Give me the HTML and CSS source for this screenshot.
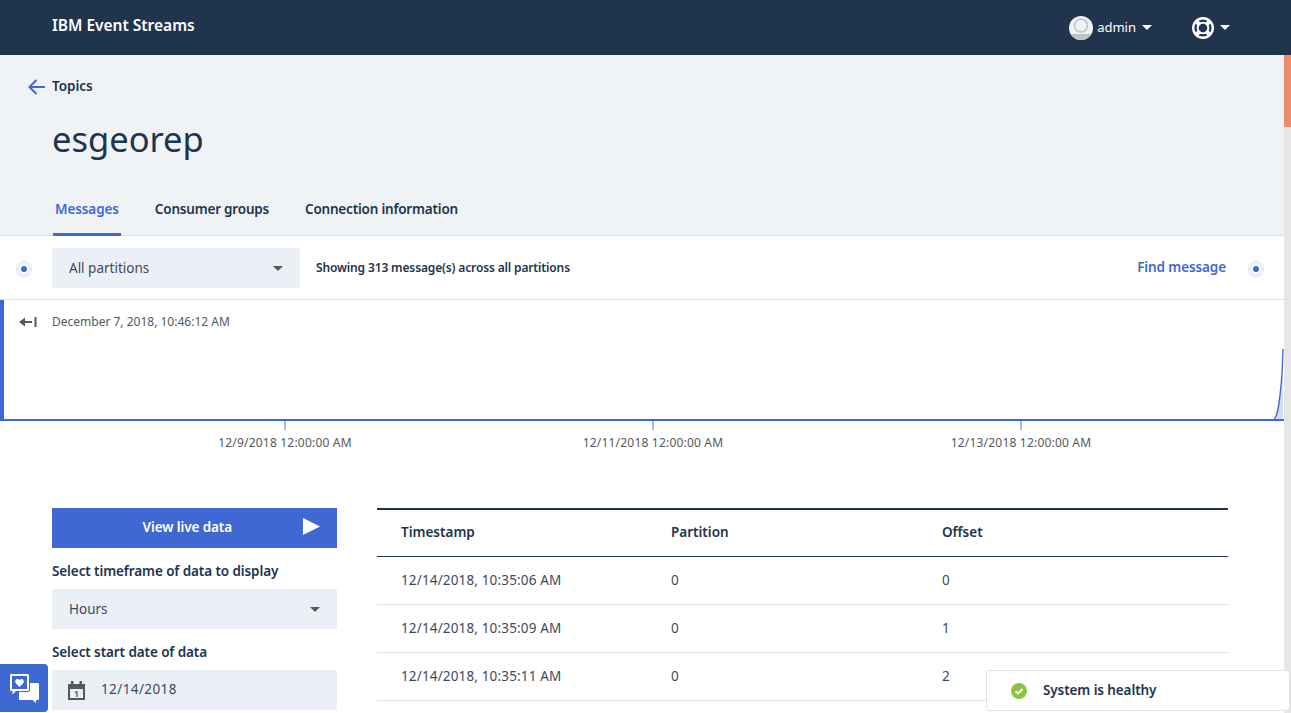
FILE: index.html
```html
<!DOCTYPE html>
<html>
<head>
  <meta charset="utf-8">
  <title>IBM Event Streams</title>
  <link rel="stylesheet" href="styles.css">
</head>
<body>

  <header class="masthead">
    <span class="brand">IBM Event Streams</span>
    <div class="user-menu">
      <svg class="avatar" width="24" height="24" viewBox="0 0 24 24">
        <defs><clipPath id="avatar-clip"><circle cx="12" cy="12" r="12"/></clipPath></defs>
        <circle cx="12" cy="12" r="12" fill="#f0f2f1"/>
        <rect x="0" y="18" width="24" height="6" fill="#bcc6c4" clip-path="url(#avatar-clip)"/>
        <circle cx="12" cy="9.500" r="6.500" fill="none" stroke="#bcc6c4" stroke-width="1.600"/>
      </svg>
      <span class="user-name">admin</span>
      <span class="caret caret-white"></span>
    </div>
    <div class="help-menu">
      <svg width="22" height="22" viewBox="0 0 22 22">
        <circle cx="11" cy="11" r="11" fill="#fff"/>
        <circle cx="11" cy="11" r="8.600" fill="#21344e"/>
        <path d="M4 4L8 8M18 4L14 8M4 18L8 14M18 18L14 14" stroke="#fff" stroke-width="4"/>
        <circle cx="11" cy="11" r="6.300" fill="#fff"/>
        <circle cx="11" cy="11" r="4.300" fill="#21344e"/>
      </svg>
      <span class="caret caret-white"></span>
    </div>
  </header>

  <div class="page">
    <main class="content">

      <section class="topic-head">
        <a class="back-link" href="#">
          <svg width="18" height="16" viewBox="0 0 18 16">
            <path d="M8.500 1L1.500 8l7 7M1.500 8H17" fill="none" stroke="#3f68d2" stroke-width="2"/>
          </svg>
          <span>Topics</span>
        </a>
        <h1 class="topic-name">esgeorep</h1>
        <nav class="tabs">
          <a class="tab tab-active" href="#">Messages</a>
          <a class="tab" href="#">Consumer groups</a>
          <a class="tab" href="#">Connection information</a>
        </nav>
      </section>

      <section class="toolbar">
        <span class="pulse pulse-left"><i></i></span>
        <div class="select select-partitions">
          <span>All partitions</span>
          <span class="caret caret-grey"></span>
        </div>
        <span class="message-count">Showing 313 message(s) across all partitions</span>
        <a class="find-link" href="#">Find message</a>
        <span class="pulse pulse-right"><i></i></span>
      </section>

      <section class="timeline">
        <div class="plot">
          <div class="plot-start">
            <svg width="18" height="10" viewBox="0 0 18 10">
              <path d="M0 5l6-4.500v3.500h7v2H6v3.500zM15.500 0h2v10h-2z" fill="#56595c"/>
            </svg>
            <span>December 7, 2018, 10:46:12 AM</span>
          </div>
          <svg class="spike" width="10" height="70" viewBox="0 0 10 70">
            <path d="M0 70C4 68 6 50 8 25L9 0V70z" fill="#d3ddf4"/>
            <path d="M0 70C4 68 6 50 8 25L9 0" fill="none" stroke="#3f68d2" stroke-width="1.300"/>
          </svg>
        </div>
        <div class="axis">
          <div class="axis-label"><i></i><span>12/9/2018 12:00:00 AM</span></div>
          <div class="axis-label"><i></i><span>12/11/2018 12:00:00 AM</span></div>
          <div class="axis-label"><i></i><span>12/13/2018 12:00:00 AM</span></div>
        </div>
      </section>

      <section class="browser">
        <aside class="controls">
          <button class="live-button">
            <span>View live data</span>
            <svg width="17" height="17" viewBox="0 0 17 17"><path d="M0 0l17 8.500L0 17z" fill="#fff"/></svg>
          </button>
          <label class="field-label">Select timeframe of data to display</label>
          <div class="select">
            <span>Hours</span>
            <span class="caret caret-grey"></span>
          </div>
          <label class="field-label">Select start date of data</label>
          <div class="select date-input">
            <svg width="17" height="19" viewBox="0 0 17 19">
              <path d="M0 3h3V0h2.500v3h6V0H14v3h3v16H0zM2 8v9h13V8z" fill="#56595c"/>
              <text class="calendar-day" x="8.500" y="16" text-anchor="middle">1</text>
            </svg>
            <span class="date-value">12/14/2018</span>
          </div>
        </aside>

        <table class="messages">
          <thead>
            <tr><th>Timestamp</th><th>Partition</th><th>Offset</th></tr>
          </thead>
          <tbody>
            <tr><td>12/14/2018, 10:35:06 AM</td><td>0</td><td>0</td></tr>
            <tr><td>12/14/2018, 10:35:09 AM</td><td>0</td><td>1</td></tr>
            <tr><td>12/14/2018, 10:35:11 AM</td><td>0</td><td>2</td></tr>
          </tbody>
        </table>
      </section>

    </main>
    <div class="scrollbar"><div class="scroll-thumb"></div></div>
  </div>

  <a class="feedback" href="#">
    <svg width="29" height="29" viewBox="0 0 29 29">
      <!-- back bubble -->
      <path d="M9 9h19a1 1 0 0 1 1 1v15a1 1 0 0 1-1 1h-2v3l-3.500-3H10a1 1 0 0 1-1-1z" fill="#fff"/>
      <!-- front bubble, outlined -->
      <path d="M1 0h17a1 1 0 0 1 1 1v15a1 1 0 0 1-1 1H6l-3.500 3.500V17H1a1 1 0 0 1-1-1V1a1 1 0 0 1 1-1z" fill="#3f68d2" stroke="#3f68d2" stroke-width="2"/>
      <path d="M1 0h17a1 1 0 0 1 1 1v15a1 1 0 0 1-1 1H6l-3.500 3.500V17H1a1 1 0 0 1-1-1V1a1 1 0 0 1 1-1zM2 2v13h15V2z" fill="#fff" fill-rule="evenodd"/>
      <path d="M9.500 13L5.800 9.200C4.500 7.500 5.500 5 7.500 5c.9 0 1.600.5 2 1.200.4-.7 1.100-1.200 2-1.200 2 0 3 2.500 1.700 4.200z" fill="#fff"/>
    </svg>
  </a>

  <div class="toast">
    <svg width="16" height="16" viewBox="0 0 16 16">
      <circle cx="8" cy="8" r="8" fill="#8cc63f"/>
      <path d="M4.500 8.200L7 10.500l4.500-4.500" fill="none" stroke="#fff" stroke-width="2"/>
    </svg>
    <span>System is healthy</span>
  </div>

</body>
</html>
```
FILE: styles.css
```css
html, body {
  height: 100%;
}
body {
  margin: 0;
  overflow: hidden;
  font-family: 'Noto Sans', 'Open Sans', sans-serif;
  font-size: 13.5px;
  color: #21344e;
  background-color: #fff;
}
a {
  text-decoration: none;
  color: inherit;
}

/* masthead */
.masthead {
  display: flex;
  align-items: center;
  height: 55px;
  padding: 0 61px 0 52px;
  background-color: #21344e;
  color: #fff;
}
.brand {
  flex: 1;
  font-size: 15.5px;
  font-weight: 600;
  margin-top: -6px;
}
.user-menu, .help-menu {
  display: flex;
  align-items: center;
}
.user-name {
  margin: -2px 6px 0 4px;
  font-size: 13px;
}
.help-menu {
  margin-left: 40px;
}
.help-menu .caret {
  margin-left: 6px;
}
.caret {
  display: inline-block;
  width: 0;
  height: 0;
  border-left: 5px solid transparent;
  border-right: 5px solid transparent;
}
.caret-white {
  border-top: 5px solid #fff;
}
.caret-grey {
  border-top: 5px solid #56595c;
}

.page {
  display: flex;
  height: 658px;
}
.content {
  flex: 1;
  min-width: 0;
}
.scrollbar {
  width: 7px;
  background-color: #e6e6e6;
}
.scroll-thumb {
  height: 72px;
  background-color: #ea8e6b;
}

/* topic heading and tabs */
.topic-head {
  height: 180px;
  padding-left: 27px;
  background-color: #eff3f5;
  border-bottom: 1px solid #dfe3e6;
}
.back-link {
  display: flex;
  align-items: center;
  padding-top: 22px;
  height: 18px;
  font-weight: 600;
}
.back-link svg {
  margin: 2px 6px 0 1px;
}
.topic-name {
  margin: 21px 0 0 25px;
  font-size: 34.5px;
  font-weight: 400;
  line-height: 46px;
}
.tabs {
  display: flex;
  gap: 32px;
  margin: 36px 0 0 26px;
}
.tab {
  display: block;
  height: 38px;
  padding: 0 2px;
  line-height: 22px;
  font-weight: 600;
  letter-spacing: -0.2px;
  box-sizing: border-box;
}
.tab-active {
  color: #3f68d2;
  letter-spacing: -0.1px;
  border-bottom: 3px solid #3f68d2;
}

/* toolbar above the timeline */
.toolbar {
  display: flex;
  align-items: center;
  height: 63px;
  border-bottom: 1px solid #dfe3e6;
}
.pulse {
  display: flex;
  align-items: center;
  justify-content: center;
  width: 16px;
  height: 16px;
  margin-top: 2px;
  box-sizing: border-box;
  border: 1px solid #cfdaf3;
  border-radius: 50%;
  box-shadow: inset 0 0 0 1px #fff, inset 0 0 0 2px #e3e9f8;
}
.pulse i {
  width: 6px;
  height: 6px;
  border-radius: 50%;
  background-color: #3f68d2;
}
.pulse-left {
  margin-left: 16px;
  margin-right: 20px;
}
.pulse-right {
  margin-left: 22px;
  margin-right: 20px;
}
.select {
  display: flex;
  align-items: center;
  justify-content: space-between;
  height: 40px;
  padding: 0 17px;
  box-sizing: border-box;
  background-color: #ebf0f7;
  color: #3d4a5c;
}
.select .caret {
  margin-top: 1px;
}
.select-partitions {
  width: 248px;
}
.message-count {
  flex: 1;
  margin: 0 0 1px 16px;
  font-size: 12px;
  font-weight: 600;
  letter-spacing: -0.14px;
}
.find-link {
  margin-bottom: 1px;
  color: #3f68d2;
  font-weight: 600;
  letter-spacing: -0.1px;
}

/* timeline */
.plot {
  position: relative;
  height: 119px;
  border-left: 4px solid #3f68d2;
  border-bottom: 2px solid #3f68d2;
}
.plot-start {
  display: flex;
  align-items: center;
  gap: 15px;
  padding: 13px 0 0 15px;
  font-size: 12px;
  color: #56595c;
}
.spike {
  position: absolute;
  right: 0;
  bottom: 0;
}
.axis {
  display: flex;
  padding-left: 101px;
}
.axis-label {
  display: flex;
  flex-direction: column;
  align-items: center;
  width: 368px;
  font-size: 12px;
  letter-spacing: 0.2px;
  color: #56595c;
}
.axis-label i {
  width: 2px;
  height: 9px;
  margin-bottom: 4px;
  background-color: #a4bbec;
}

/* controls and message table */
.browser {
  display: flex;
  align-items: flex-start;
  gap: 40px;
  margin-top: 57px;
  padding-left: 52px;
}
.controls {
  width: 285px;
  flex: none;
}
.live-button {
  display: flex;
  align-items: center;
  justify-content: flex-end;
  gap: 71px;
  width: 100%;
  height: 40px;
  padding: 0 17px 0 0;
  border: 0;
  background-color: #3f68d2;
  color: #fff;
  font-family: inherit;
  font-size: 13.5px;
  font-weight: 600;
  letter-spacing: -0.1px;
}
.live-button span {
  margin-bottom: 3px;
}
.live-button svg {
  margin-bottom: 3px;
}
.field-label {
  display: block;
  margin: 13px 0 8px;
  font-weight: 600;
  line-height: 20px;
  letter-spacing: -0.1px;
}
.date-input {
  justify-content: flex-start;
  gap: 16px;
  padding-left: 16px;
}
.calendar-day {
  font-size: 9.5px;
  font-weight: 600;
  fill: #56595c;
}
.date-value {
  margin-bottom: 2px;
  letter-spacing: 0.4px;
}
.messages {
  width: 851px;
  table-layout: fixed;
  border-collapse: collapse;
  border-top: 2px solid #21344e;
}
.messages th {
  height: 43px;
  padding: 0 0 3px 24px;
  text-align: left;
  font-weight: 600;
  border-bottom: 1px solid #21344e;
}
.messages td {
  height: 45px;
  padding: 0 0 2px 24px;
  border-bottom: 1px solid #dfe3e6;
  color: #3d4a5c;
  letter-spacing: 0.15px;
}
.messages th:nth-child(1) {
  width: 246px;
}
.messages th:nth-child(2) {
  width: 247px;
}

/* floating bits */
.feedback {
  position: fixed;
  left: 0;
  top: 664px;
  display: flex;
  align-items: flex-start;
  width: 48px;
  height: 48px;
  padding: 10px 0 0 10px;
  box-sizing: border-box;
  border-radius: 0 4px 4px 0;
  background-color: #3f68d2;
}
.toast {
  position: fixed;
  left: 986px;
  top: 670px;
  display: flex;
  align-items: center;
  gap: 16px;
  width: 304px;
  height: 41px;
  padding: 0 0 2px 24px;
  box-sizing: border-box;
  background-color: #fff;
  border: 1px solid #dfe3e6;
  border-radius: 3px;
  font-weight: 600;
  letter-spacing: -0.1px;
}
.toast svg {
  margin-top: 2px;
}
```
